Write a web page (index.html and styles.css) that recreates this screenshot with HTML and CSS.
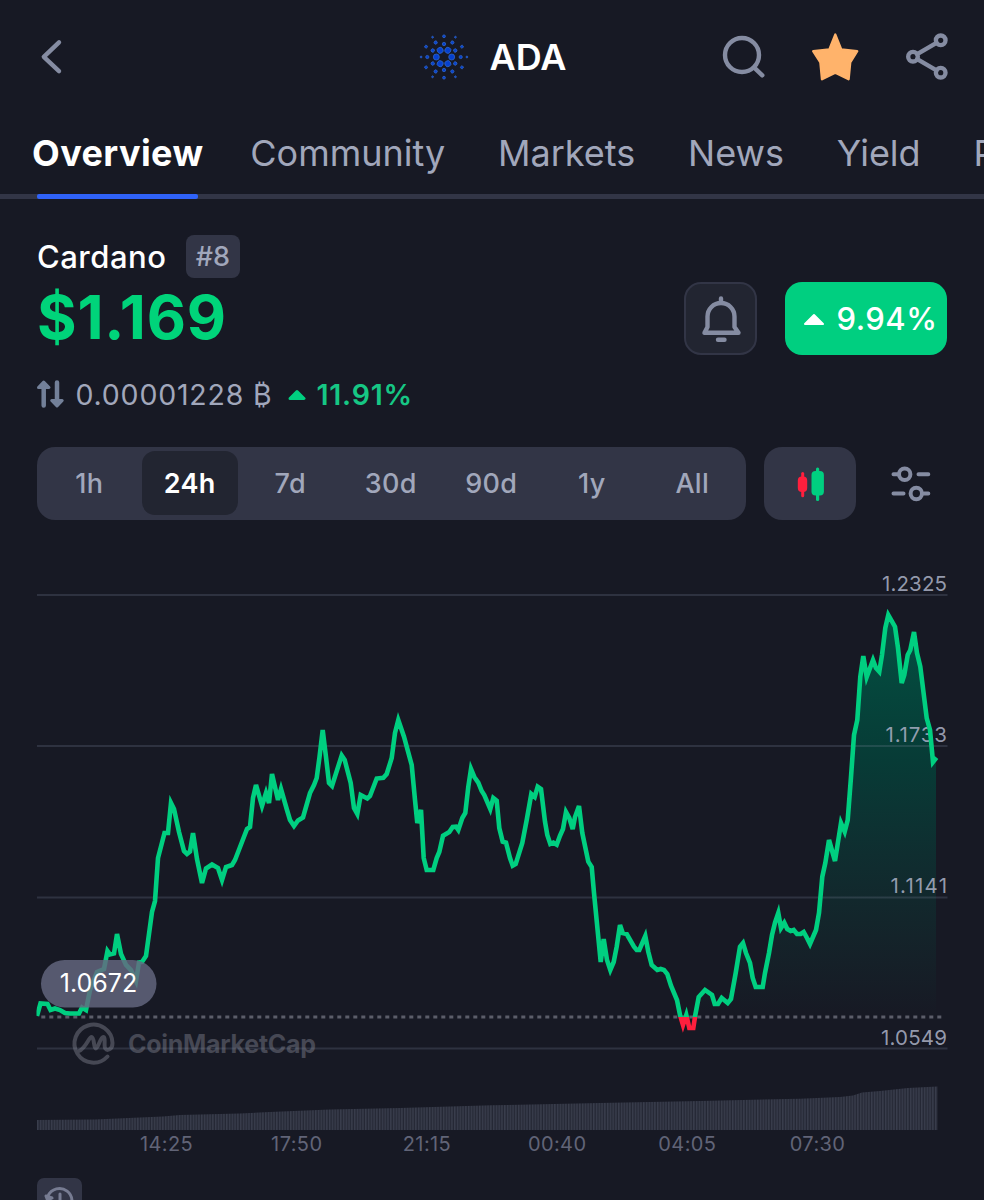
FILE: index.html
```html
<!DOCTYPE html>
<html lang="en">
  <head>
    <meta charset="UTF-8" />
    <meta name="viewport" content="width=device-width, initial-scale=1.0" />
    <title>ADA - Cardano</title>
    <link rel="stylesheet" href="styles.css">
  </head>
  <body>
    <!-- Top bar -->
    <header class="topbar">
      <svg class="icon back" width="30" height="40" viewBox="36 37 30 40"><path d="M59 42.3 43.8 56.8 59 71.2" /></svg>
      <div class="coin">
        <svg class="coin-logo" width="50" height="50" viewBox="-25 -25 50 50">
          <defs>
            <g id="ray">
              <circle cx="7.7" cy="0" r="3" />
              <circle cx="16.7" cy="0" r="1.6" />
              <circle cx="22.9" cy="0" r="0.9" />
              <g transform="rotate(30)">
                <circle cx="13" cy="0" r="1.7" />
                <circle cx="20.7" cy="0" r="1.4" />
              </g>
            </g>
          </defs>
          <use href="#ray" />
          <use href="#ray" transform="rotate(60)" />
          <use href="#ray" transform="rotate(120)" />
          <use href="#ray" transform="rotate(180)" />
          <use href="#ray" transform="rotate(240)" />
          <use href="#ray" transform="rotate(300)" />
        </svg>
        <span class="coin-symbol">ADA</span>
      </div>
      <div class="actions">
        <svg class="icon" width="46" height="50" viewBox="720 32 46 50"><circle cx="742" cy="55" r="17" /><path d="M755 68.3 762.3 75.3" /></svg>
        <svg class="star" width="50" height="50" viewBox="810 32 50 50"><path d="M835.3 34.6 841.2 49.4 857.2 51.2 850.2 62.4 848.6 79.2 835.3 72.6 822 79.2 820.4 62.4 813.2 51.2 829.4 49.4Z" /></svg>
        <svg class="icon" width="46" height="50" viewBox="903 32 46 50"><path d="M936.5 42.8 917.2 54.2M917.2 59.2 936.5 70.3" /><circle cx="940.7" cy="40.3" r="4.8" /><circle cx="913" cy="56.7" r="4.8" /><circle cx="940.7" cy="72.7" r="4.8" /></svg>
      </div>
    </header>

    <!-- Section tabs -->
    <nav class="tabs">
      <a class="tab active">Overview</a>
      <a class="tab">Community</a>
      <a class="tab">Markets</a>
      <a class="tab">News</a>
      <a class="tab">Yield</a>
      <a class="tab">P</a>
    </nav>

    <!-- Price summary -->
    <section class="summary">
      <div class="summary-left">
        <div class="name-row">
          <span class="name">Cardano</span>
          <span class="rank">#8</span>
        </div>
        <div class="price">$1.169</div>
      </div>
      <div class="summary-right">
        <button class="bell">
          <svg class="icon" width="44" height="52" viewBox="699 292 44 52"><path d="M721 297.5V302M704.5 331.8H738.5L734.5 326V315.5A13.5 13.5 0 0 0 707.5 315.5V326L704.5 331.8M718 338.7H724.5" /></svg>
        </button>
        <div class="change">
          <svg width="22" height="14" viewBox="0 0 22 14"><path d="M2 12 11 3 20 12Z" /></svg>
          <span>9.94%</span>
        </div>
      </div>
    </section>

    <div class="btc-row">
      <svg class="swap" width="28" height="30" viewBox="37 379 28 30"><path d="M43.7 405.5V385M57 382.5V403" /><path class="head" d="M38.5 387.5 43.7 382 49 387.5ZM51.7 400.5 57 406 62.2 400.5Z" /></svg>
      <span class="btc-price">0.00001228 <span class="btc-sign">₿</span></span>
      <svg class="up" width="18" height="13" viewBox="0 0 18 13"><path d="M2 10.5 9 3.5 16 10.5Z" /></svg>
      <span class="btc-change">11.91%</span>
    </div>

    <!-- Range selector -->
    <div class="controls">
      <div class="ranges">
        <span class="range">1h</span>
        <span class="range active">24h</span>
        <span class="range">7d</span>
        <span class="range">30d</span>
        <span class="range">90d</span>
        <span class="range">1y</span>
        <span class="range">All</span>
      </div>
      <button class="candles">
        <svg width="32" height="40" viewBox="794 463 32 40">
          <g fill="#ff1f3d"><rect x="801.2" y="471" width="3" height="25.3" rx="1.5" /><rect x="797.8" y="475.5" width="9.4" height="15.5" rx="4" /></g>
          <g fill="#00cf80"><rect x="816" y="466.5" width="3.2" height="33.5" rx="1.5" /><rect x="811.5" y="470" width="12.4" height="24.5" rx="4" /></g>
        </svg>
      </button>
      <svg class="icon sliders" width="42" height="40" viewBox="890 463.5 42 40"><path d="M893.5 473.7H898M918.5 473.7H928.3M893.5 493H903.5M924 493H928.3" /><circle cx="904.7" cy="473.7" r="5.7" /><circle cx="916.3" cy="493" r="5.7" /></svg>
    </div>

    <!-- Price chart -->
    <svg class="chart" width="984" height="510" viewBox="0 560 984 510">
      <defs>
        <linearGradient id="area" gradientUnits="userSpaceOnUse" x1="0" y1="615" x2="0" y2="1017">
          <stop offset="0" stop-color="#005a47" stop-opacity="0.88" />
          <stop offset="0.36" stop-color="#004a3e" stop-opacity="0.7" />
          <stop offset="0.6" stop-color="#044a40" stop-opacity="0.42" />
          <stop offset="0.86" stop-color="#0a4a40" stop-opacity="0.15" />
          <stop offset="1" stop-color="#0a4a40" stop-opacity="0" />
        </linearGradient>
        <clipPath id="above"><rect x="36.5" y="560" width="920" height="457" /></clipPath>
        <clipPath id="below"><rect x="36.5" y="1017" width="920" height="50" /></clipPath>
        <path id="line" d="M37 1016 40.5 1003.5 47.5 1004 50.5 1010 55 1008.5 60 1010 65 1013 70 1013.5 79 1013.5 82 1007.5 86 1010 90 990 97 972 104 969 107.5 951 110 954.5 114 953.5 117 934 121 954 126 965 131 970 136 981 139 962.5 142 962 146 956 152 912 155 901 158 858 164.5 833 168 833 171 803 174 809 179 832 184 851 187 854 190 851.5 193 833 197 859 202 883 206 868.5 212 864.5 218 868 222 880 226 867 232 865 235 860 247 829 250 827 253 798 256 785 262 806 266 793 269 803 272 774 278 800 281 789 287 810 290 820 294 826 298 820.5 303 817.5 310 793 314 785 316.7 778 319.5 757 322.7 730 326 757 329 783 332 786 341.7 755.5 344.7 760 350.7 783 354 808 357.3 814 360.7 795 367.3 798.5 370 796 376.7 778.5 383.3 777.7 386.7 774 391.7 758 395 733 398.3 720 404 736.7 411.7 765 415 800 417.3 823 421 810 423.7 858 426.7 870 433.3 870 436.7 858 439.3 852 443 835.7 449.3 832 452.7 827 456 826.7 458.3 830 462.3 818 465.3 813 468.3 786.7 471 769 474.3 777 478.3 782.7 481.7 791 484.3 795 490.3 809 493.3 798 496.7 800.7 499.3 828 502.7 841.7 506 842.7 510 858 512.7 865.7 515.7 864 522.3 843 526.7 820 531.3 794 534.7 797 537.7 786.7 541 789 545 821.7 547.3 835 550.3 844 553.3 842.7 556.7 844.7 560 835.7 563 829 566 812 569.3 818 572.7 829 575 817 579 806 582.3 833 588.3 861.7 591.7 867 594 893 600.7 962 603.7 939 607 960 610.3 970 613.7 962 616.7 946.7 620 925 622.7 933 626.7 934 634 946.7 636.7 950 639.3 950 645.3 936 648.3 951.7 651.7 965 657.3 970 660.7 969 664 970 667.3 974 671 985.7 677 1000 680 1015 683 1025 686.3 1015 689.3 1028 693.3 1028 695.3 1015 698.7 997 705 990 712 995 714.7 1004 718 1004 721.7 998 727.7 1003 731 999 735.7 973 740 946.7 743 943 746 953 750 963 752.7 978 755.7 987 762.7 987 765 973 769 953 772 935 775 922.7 778.3 913 781 928 784.3 922.7 787.3 929 790.7 931 793.7 930 797 934 800.7 934 803.7 932 807 938 810 944 816 930 819 913 822.3 876.7 825.3 863 829 840 835 861 841 823 844.7 831.7 847.7 820 851 777 854 735 857.3 720 860.3 676.7 863.3 656 866.7 677 873 660 876 668 879.3 671.7 882 655 885.3 628 888.3 615 895 626.7 898 648 901.7 683 904.3 675 907.7 655 910.3 650 914 632 917 653 920.3 666.7 926.7 718 930 730 933 762 936.5 757.5" />
      </defs>

      <!-- watermark -->
      <g class="watermark">
        <path d="M107.5 1056.5A19 19 0 1 1 112.5 1043C112.5 1050 107 1051 105.3 1048.5 103.500 1046 106 1037 103.200 1037 100.500 1037 98 1048.500 95.800 1048.500 93.500 1048.500 94.500 1037 91.500 1037 89 1037 85.500 1048.500 79 1051" />
        <text x="128" y="1053" textLength="188">CoinMarketCap</text>
      </g>

      <path fill="url(#area)" d="M695 1017 698.7 997 705 990 712 995 714.7 1004 718 1004 721.7 998 727.7 1003 731 999 735.7 973 740 946.7 743 943 746 953 750 963 752.7 978 755.7 987 762.7 987 765 973 769 953 772 935 775 922.7 778.3 913 781 928 784.3 922.7 787.3 929 790.7 931 793.7 930 797 934 800.7 934 803.7 932 807 938 810 944 816 930 819 913 822.3 876.7 825.3 863 829 840 835 861 841 823 844.7 831.7 847.7 820 851 777 854 735 857.3 720 860.3 676.7 863.3 656 866.7 677 873 660 876 668 879.3 671.7 882 655 885.3 628 888.3 615 895 626.7 898 648 901.7 683 904.3 675 907.7 655 910.3 650 914 632 917 653 920.3 666.7 926.7 718 930 730 933 762 936 757.5V1017Z" />

      <g class="grid">
        <path d="M37 595H947.5M37 746H947.5M37 897.5H947.5M37 1048.5H947.5" />
        <path class="open-line" d="M41.3 1017H942" />
      </g>
      <g class="y-labels">
        <text x="882" y="590.5" textLength="65">1.2325</text>
        <text x="885.5" y="742" textLength="61.5">1.1733</text>
        <text x="890.5" y="893" textLength="56.5">1.1141</text>
        <text x="881" y="1045" textLength="66">1.0549</text>
      </g>

      <use class="line up-line" href="#line" clip-path="url(#above)" />
      <use class="line down-line" href="#line" clip-path="url(#below)" />

      <rect class="open-pill" x="41" y="960" width="115.5" height="47.5" rx="23.7" />
      <text class="open-text" x="98.5" y="991.7">1.0672</text>
    </svg>

    <!-- Volume -->
    <svg class="volume" width="984" height="60" viewBox="0 1070 984 60">
      <defs>
        <pattern id="bars" patternUnits="userSpaceOnUse" x="37" y="0" width="2.78" height="1200">
          <rect width="2.78" height="1200" fill="#242734" />
          <rect width="1.5" height="1200" fill="#393d4c" />
        </pattern>
      </defs>
      <path fill="url(#bars)" d="M37 1130V1120L95 1119.5 140 1117.5 163 1116.5 180 1115 240 1113.5 270 1112 330 1109.5 400 1108 492 1105.3 600 1103 700 1101 800 1098.7 840 1097 853 1095.5 862 1092.5 880 1091 908 1088 937.5 1086.5V1130Z" />
    </svg>
    <div class="x-labels">
      <span>14:25</span>
      <span>17:50</span>
      <span>21:15</span>
      <span>00:40</span>
      <span>04:05</span>
      <span>07:30</span>
    </div>

    <div class="history">
      <svg width="45" height="45" viewBox="37 1178 45 45"><path d="M48 1196A12.5 12.5 0 1 1 48 1206M60 1194V1202L66 1206" /><path class="history-head" d="M46 1196 47.5 1200 52 1198Z" /></svg>
    </div>
  </body>
</html>
```
FILE: styles.css
```css
* {
  box-sizing: border-box;
}

body {
  margin: 0;
  width: 984px;
  height: 1200px;
  overflow: hidden;
  background: #171924;
  color: #ffffff;
  font-family: Inter, 'Liberation Sans', sans-serif;
}

svg {
  display: block;
  flex: none;
}

button {
  border: none;
  padding: 0;
}

.icon {
  fill: none;
  stroke: #858ca2;
  stroke-width: 4.4;
  stroke-linecap: round;
  stroke-linejoin: round;
}

/* Top bar */
.topbar {
  display: grid;
  grid-template-columns: 1fr auto 1fr;
  align-items: center;
  height: 114px;
  padding: 0 35px 0 36px;
}

.coin {
  display: flex;
  align-items: center;
  gap: 21px;
}

.coin-logo {
  fill: #0540cf;
  stroke: #2e63c4;
  stroke-width: 0.8;
}

.coin-symbol {
  font-size: 36px;
  font-weight: 600;
  line-height: 40px;
}

.actions {
  display: flex;
  justify-content: flex-end;
  gap: 44px;
}

.star {
  margin-right: -1px;
  fill: #ffb36b;
  stroke: #ffb36b;
  stroke-width: 2.4;
  stroke-linejoin: round;
}

/* Tabs */
.tabs {
  display: flex;
  gap: 52.8px;
  height: 85px;
  padding-left: 32px;
  overflow: hidden;
  background: linear-gradient(#323546, #323546) bottom / 100% 5px no-repeat;
}

.tab {
  position: relative;
  flex: none;
  padding-top: 17px;
  font-size: 36px;
  line-height: 44px;
  color: #a1a7bb;
}

.tab.active {
  margin-right: -6px;
  font-weight: 700;
  letter-spacing: 0.4px;
  color: #ffffff;
}

.tab.active::after {
  content: '';
  position: absolute;
  left: 5px;
  right: 5px;
  bottom: 0;
  height: 5px;
  border-radius: 2px;
  background: #2f62f8;
}

/* Price summary */
.summary {
  display: flex;
  justify-content: space-between;
  align-items: flex-end;
  height: 156px;
  padding: 0 37px;
}

.summary-left {
  height: 120px;
}

.name-row {
  display: flex;
  align-items: center;
  gap: 19.5px;
  height: 43px;
}

.name {
  font-size: 31px;
  font-weight: 500;
  line-height: 38px;
  letter-spacing: 0.5px;
}

.rank {
  display: flex;
  align-items: center;
  justify-content: center;
  width: 54px;
  height: 43px;
  border-radius: 8px;
  background: #323546;
  color: #a1a7bb;
  font-size: 27px;
  font-weight: 500;
}

.price {
  font-size: 60.5px;
  font-weight: 700;
  line-height: 78px;
  letter-spacing: 0.8px;
  color: #00d47a;
}

.summary-right {
  display: flex;
  gap: 27.5px;
}

.bell {
  display: flex;
  align-items: center;
  justify-content: center;
  width: 73px;
  height: 73px;
  border: 2px solid #323546;
  border-radius: 17px;
  background: #222531;
}

.change {
  display: flex;
  align-items: center;
  padding-left: 18px;
  gap: 12px;
  width: 162.5px;
  height: 73px;
  border-radius: 17px;
  background: #00cf80;
  font-size: 31px;
  font-weight: 500;
  letter-spacing: 0.5px;
}

.change path {
  fill: #ffffff;
  stroke: #ffffff;
  stroke-width: 2;
  stroke-linejoin: round;
}

/* BTC price */
.btc-row {
  display: flex;
  align-items: center;
  height: 40px;
  margin-top: 19px;
  padding-left: 37px;
  font-size: 28.5px;
  letter-spacing: 0.8px;
}

.swap {
  stroke: #738099;
  stroke-width: 4.5;
  stroke-linecap: round;
  stroke-linejoin: round;
}

.swap .head {
  fill: #738099;
  stroke-width: 3;
}

.btc-price {
  margin-left: 10.5px;
  color: #a1a7bb;
}

.up {
  margin-left: 16px;
  fill: #00cf80;
  stroke: #00cf80;
  stroke-width: 3;
  stroke-linejoin: round;
}

.btc-change {
  margin-left: 10px;
  font-weight: 600;
  color: #16c784;
}

/* Range selector */
.controls {
  display: flex;
  align-items: center;
  height: 73px;
  margin-top: 33px;
  padding-left: 37px;
}

.ranges {
  display: flex;
  width: 709px;
  height: 73px;
  padding: 4px 3.5px 5px 2px;
  border-radius: 18px;
  background: #323546;
}

.range {
  flex: 1;
  display: flex;
  align-items: center;
  justify-content: center;
  margin: 0 2px;
  padding-top: 1px;
  border-radius: 13px;
  color: #a1a7bb;
  font-size: 27px;
  font-weight: 500;
  letter-spacing: 0.3px;
}

.range.active {
  background: #222531;
  color: #ffffff;
  font-weight: 600;
}

.candles {
  display: flex;
  align-items: center;
  justify-content: center;
  width: 92px;
  height: 73px;
  margin-left: 18px;
  border-radius: 18px;
  background: #323546;
}

.sliders {
  margin-left: 34px;
  stroke-width: 4;
}

/* Chart */
.chart {
  margin-top: 40px;
}

.grid path {
  fill: none;
  stroke: #858ca2;
  stroke-opacity: 0.22;
  stroke-width: 2.2;
}

.grid .open-line {
  stroke: #5b5d69;
  stroke-opacity: 1;
  stroke-width: 2.8;
  stroke-dasharray: 4 4;
}

.y-labels text {
  fill: #a1a7bb;
  fill-opacity: 0.92;
  font-size: 20.5px;
}

.line {
  fill: none;
  stroke-width: 4.6;
}

.up-line {
  stroke: #00cf80;
}

.down-line {
  stroke: #ff1f3d;
}

.watermark path {
  fill: none;
  stroke: #464854;
  stroke-width: 4;
  stroke-linecap: round;
  stroke-linejoin: round;
}

.watermark text {
  fill: #464854;
  font-size: 25px;
  font-weight: 700;
}

.open-pill {
  fill: #646880;
  fill-opacity: 0.82;
}

.open-text {
  fill: #ffffff;
  font-size: 25px;
  text-anchor: middle;
}

/* Volume and time axis */
.x-labels {
  display: flex;
  padding-left: 101.5px;
}

.x-labels span {
  width: 130.2px;
  text-align: center;
  font-size: 20px;
  line-height: 28px;
  letter-spacing: 0.4px;
  color: #616477;
}

.history {
  width: 45px;
  height: 45px;
  margin: 20px 0 0 37px;
  border-radius: 7px;
  background: #323546;
}

.history path {
  fill: none;
  stroke: #777c92;
  stroke-width: 3;
  stroke-linecap: round;
  stroke-linejoin: round;
}

.history .history-head {
  fill: #777c92;
}
```
